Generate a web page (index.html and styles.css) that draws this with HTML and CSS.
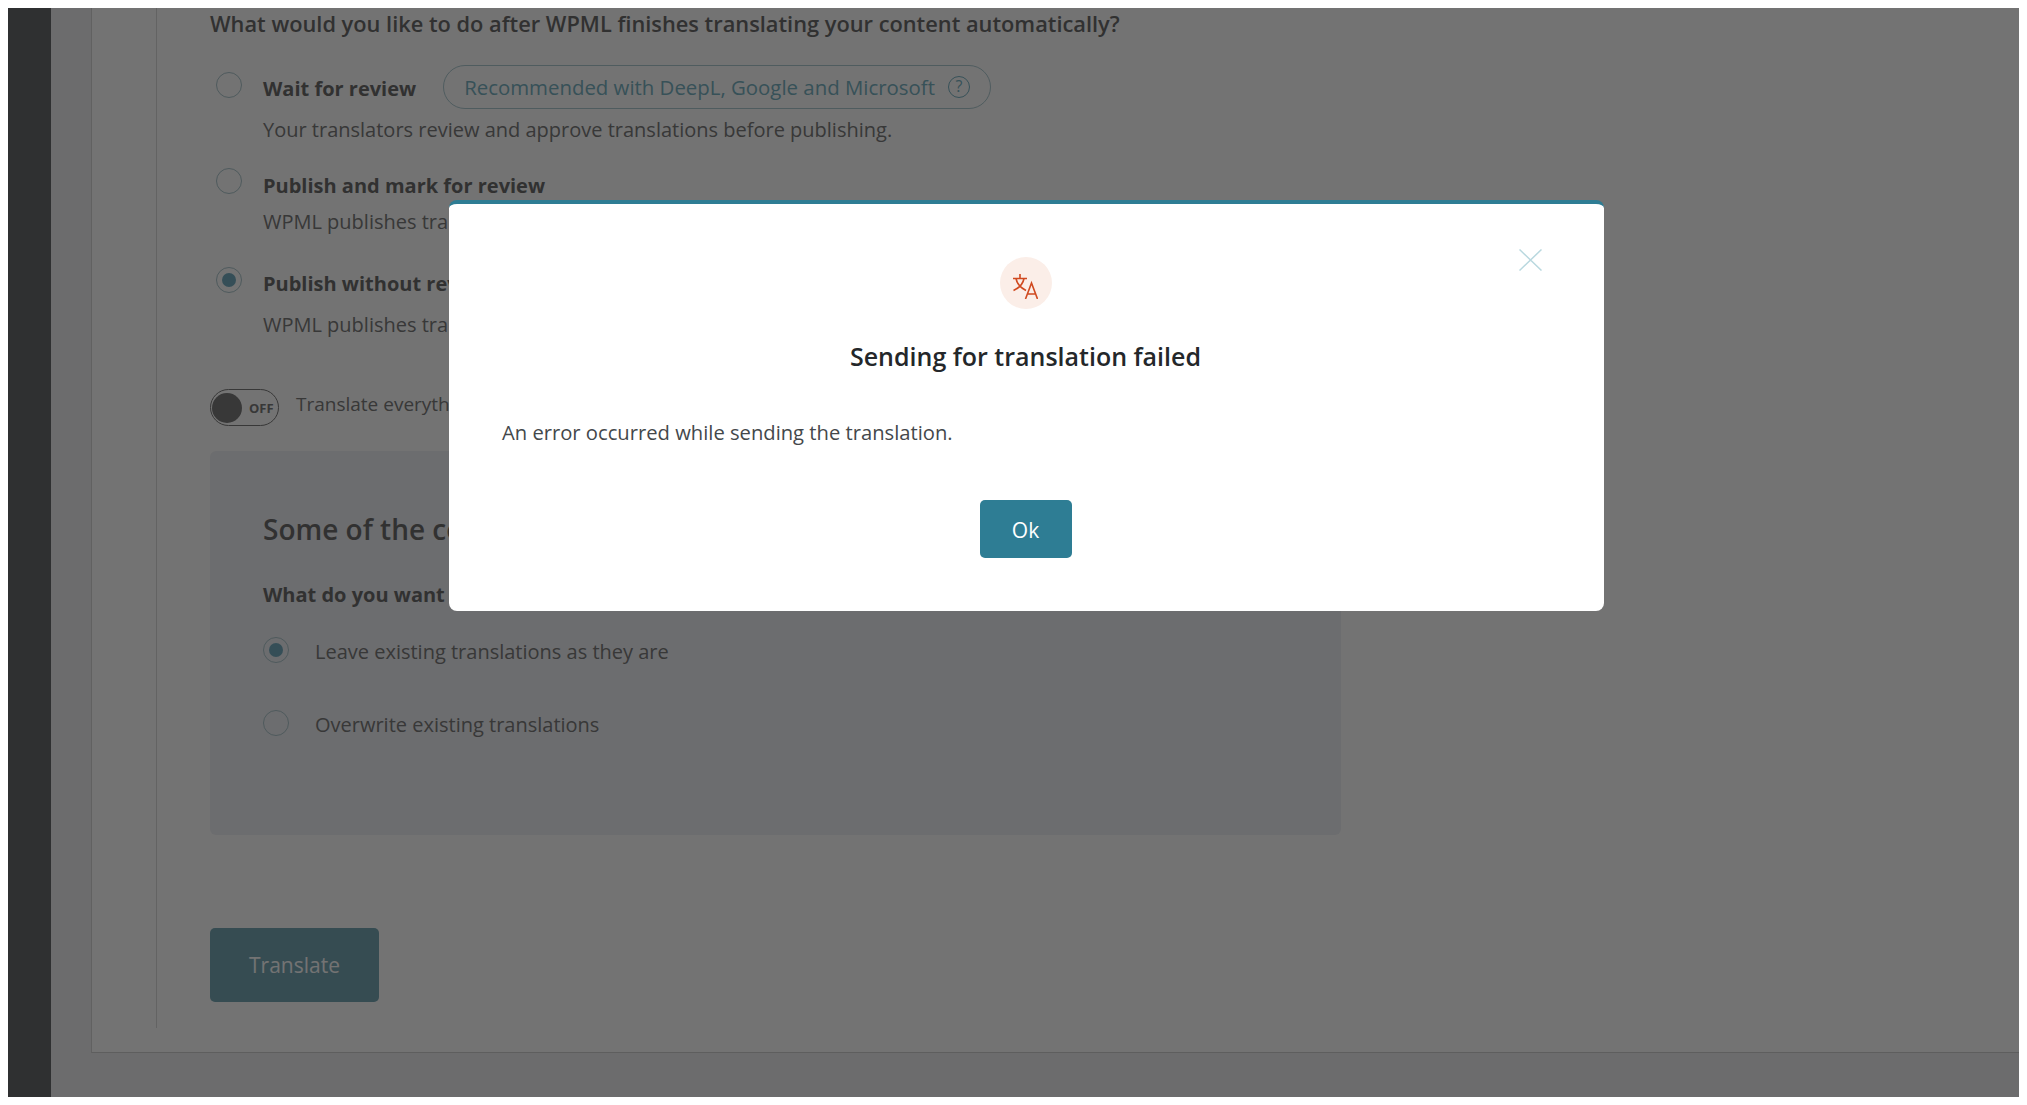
FILE: index.html
```html
<!doctype html>
<html lang="en">
  <head>
    <meta charset="UTF-8" />
    <meta name="viewport" content="width=device-width, initial-scale=1.0" />
    <title>Translation settings</title>
    <link rel="stylesheet" href="styles.css">
  </head>
  <body>
    <div class="screen">
      <div class="sidebar"></div>

      <div class="page">
        <div class="wrap">
          <div class="content">
            <div class="question">What would you like to do after WPML finishes translating your content automatically?</div>

            <div class="option option-wait">
              <div class="option-head">
                <span class="radio"></span>
                <span class="option-label">Wait for review</span>
                <span class="pill">
                  Recommended with DeepL, Google and Microsoft
                  <span class="pill-help">?</span>
                </span>
              </div>
              <div class="option-desc">Your translators review and approve translations before publishing.</div>
            </div>

            <div class="option option-mark">
              <div class="option-head">
                <span class="radio"></span>
                <span class="option-label">Publish and mark for review</span>
              </div>
              <div class="option-desc">WPML publishes translations and marks them for review.</div>
            </div>

            <div class="option option-publish">
              <div class="option-head">
                <span class="radio checked"></span>
                <span class="option-label">Publish without review</span>
              </div>
              <div class="option-desc">WPML publishes translations without any review.</div>
            </div>

            <div class="toggle-row">
              <div class="toggle">
                <span class="toggle-knob"></span>
                <span class="toggle-text">OFF</span>
              </div>
              <span class="toggle-label">Translate everything automatically</span>
            </div>

            <div class="existing-panel">
              <div class="panel-title">Some of the content already has translations</div>
              <div class="panel-question">What do you want to do with them?</div>
              <div class="panel-option panel-option-first">
                <span class="radio checked"></span>
                <span>Leave existing translations as they are</span>
              </div>
              <div class="panel-option panel-option-second">
                <span class="radio"></span>
                <span>Overwrite existing translations</span>
              </div>
            </div>

            <button class="btn-translate">Translate</button>
          </div>
        </div>
      </div>

      <div class="overlay">
        <div class="modal">
          <button class="modal-close">
            <svg viewBox="0 0 23 22" width="23" height="22">
              <path d="M0.5 0.5L22.5 21.5M22.5 0.5L0.5 21.5" />
            </svg>
          </button>
          <div class="modal-icon">
            <svg viewBox="0 0 25 25" width="25" height="25">
              <path d="M7 0V4.500M0 4.500H14M3 4.500C4 10 8 14 13 16.500M11 4.500C10 10 6 14 0.500 16.500" />
              <path d="M12.500 25L18.500 9L24.500 25M14.500 20H22.500" />
            </svg>
          </div>
          <div class="modal-title">Sending for translation failed</div>
          <div class="modal-text">An error occurred while sending the translation.</div>
          <button class="btn-ok">Ok</button>
        </div>
      </div>
    </div>
  </body>
</html>
```

FILE: styles.css
```css
* {
  margin: 0;
  padding: 0;
  box-sizing: border-box;
}

body {
  margin: 8px;
  background: #fff;
  font-family: 'Open Sans', 'Noto Sans', sans-serif;
  font-size: 20px;
  color: #3c3c3c;
}

button {
  font-family: inherit;
  border: none;
}

.screen {
  position: relative;
  display: flex;
  height: 1089px;
  overflow: hidden;
  background: #f0f0f1;
}

.sidebar {
  width: 43px;
  flex-shrink: 0;
  background: #686a6e;
}

.page {
  flex: 1;
  padding: 0 0 44px 40px;
}

.wrap {
  height: 100%;
  padding-left: 64px;
  background: #fff;
  border-left: 1px solid #d8d8d8;
  border-bottom: 1px solid #d0d0d0;
}

.content {
  height: 1020px;
  padding-left: 53px;
  border-left: 1px solid #dcdcdc;
}

.question {
  height: 32px;
  line-height: 32px;
  font-size: 21.8px;
  font-weight: 600;
  white-space: nowrap;
  color: #6e6e6e;
}

.option {
  padding-left: 6px;
}

.option-wait {
  margin-top: 32px;
}

.option-mark {
  margin-top: 23px;
}

.option-publish {
  margin-top: 30px;
}

.option-head {
  display: flex;
  align-items: flex-start;
}

.radio {
  position: relative;
  width: 26px;
  height: 26px;
  flex-shrink: 0;
  border: 1px solid #aec8ce;
  border-radius: 50%;
}

.radio.checked::after {
  content: '';
  position: absolute;
  top: 5px;
  left: 5px;
  width: 14px;
  height: 14px;
  border-radius: 50%;
  background: #76aec2;
}

.option-label {
  margin: 3px 0 0 21px;
  line-height: 30px;
  font-weight: 700;
  white-space: nowrap;
  color: #6e6e6e;
}

.option-wait .option-label,
.option-publish .option-label {
  margin-top: 2px;
}

.pill {
  display: flex;
  align-items: center;
  height: 44px;
  margin: -7px 0 0 27px;
  padding: 0 20px;
  border: 1px solid #b0ccd3;
  border-radius: 22px;
  font-size: 20.4px;
  color: #7ab4c4;
  white-space: nowrap;
}

.pill-help {
  width: 22px;
  height: 22px;
  margin-left: 13px;
  border: 1.5px solid #7ab4c4;
  border-radius: 50%;
  font-size: 16px;
  line-height: 19px;
  text-align: center;
}

.option-desc {
  margin: 6px 0 0 47px;
  line-height: 30px;
  white-space: nowrap;
  color: #7c7c7c;
}

.option-publish .option-desc {
  margin-top: 11px;
}

.toggle-row {
  display: flex;
  margin-top: 49px;
}

.toggle {
  display: flex;
  align-items: center;
  width: 69px;
  height: 37px;
  padding: 0 1px;
  border: 1px solid #7c7c7c;
  border-radius: 19px;
}

.toggle-knob {
  width: 30px;
  height: 30px;
  border-radius: 50%;
  background: #7c7c7c;
}

.toggle-text {
  margin-left: 7px;
  font-size: 13px;
  font-weight: 700;
  color: #7c7c7c;
}

.toggle-label {
  margin-left: 17px;
  line-height: 30px;
  font-size: 19px;
  color: #7c7c7c;
}

.existing-panel {
  width: 1131px;
  height: 384px;
  margin-top: 25px;
  padding: 55px 0 0 53px;
  border-radius: 6px;
  background: #f0f1f5;
}

.panel-title {
  line-height: 46px;
  font-size: 28px;
  font-weight: 600;
  white-space: nowrap;
  color: #6e6e6e;
}

.panel-question {
  margin-top: 28px;
  line-height: 30px;
  font-weight: 700;
  white-space: nowrap;
  color: #6e6e6e;
}

.panel-option {
  display: flex;
  align-items: flex-start;
  color: #7c7c7c;
}

.panel-option span:last-child {
  margin-left: 26px;
  line-height: 30px;
}

.panel-option-first {
  margin-top: 27px;
}

.panel-option-second {
  margin-top: 43px;
}

.btn-translate {
  display: block;
  width: 169px;
  height: 74px;
  margin-top: 93px;
  border-radius: 5px;
  background: #78a8b6;
  color: #fff;
  font-size: 21px;
}

.overlay {
  position: absolute;
  top: 0;
  left: 0;
  width: 100%;
  height: 100%;
  padding: 192px 0 0 441px;
  background: rgba(0, 0, 0, 0.55);
}

.modal {
  position: relative;
  display: flex;
  flex-direction: column;
  align-items: center;
  width: 1155px;
  height: 411px;
  padding: 53px 2px 0 0;
  border-top: 4px solid #2e7d94;
  border-radius: 8px;
  background: #fff;
  color: #333;
}

.modal-close {
  position: absolute;
  top: 45px;
  right: 62px;
  display: flex;
  background: none;
}

.modal-close path {
  fill: none;
  stroke: #b9d8df;
  stroke-width: 1.5;
}

.modal-icon {
  display: flex;
  align-items: center;
  justify-content: center;
  width: 52px;
  height: 52px;
  padding-top: 7px;
  border-radius: 50%;
  background: #fbeee8;
}

.modal-icon path {
  fill: none;
  stroke: #d0491f;
  stroke-width: 1.6;
}

.modal-title {
  margin-top: 29px;
  line-height: 36px;
  font-size: 25px;
  font-weight: 600;
  color: #24272a;
}

.modal-text {
  align-self: flex-start;
  margin: 43px 0 0 53px;
  line-height: 30px;
  font-size: 20.2px;
  color: #44484b;
}

.btn-ok {
  width: 92px;
  height: 58px;
  margin-top: 53px;
  padding-top: 2px;
  border-radius: 5px;
  background: #2e7d94;
  color: #fff;
  font-size: 21px;
}
```
